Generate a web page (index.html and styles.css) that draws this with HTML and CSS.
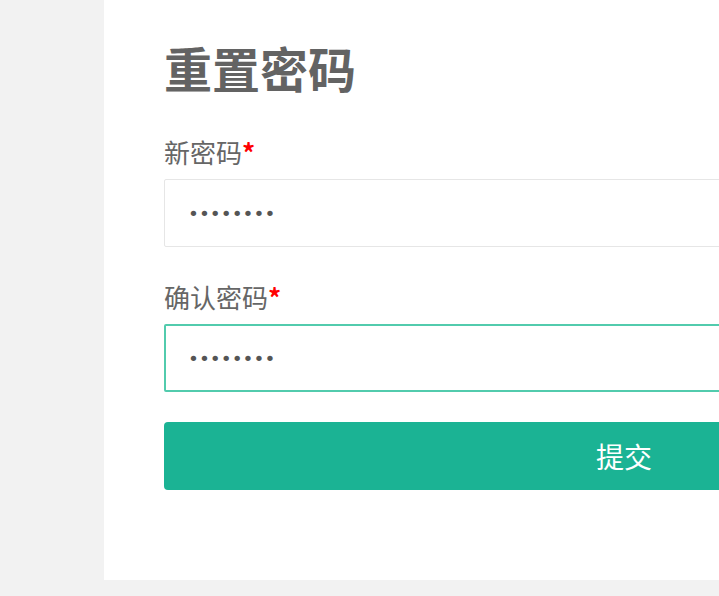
FILE: index.html
```html
<!DOCTYPE html>
<html lang="zh-CN">
<head>
<meta charset="utf-8">
<title>重置密码</title>
<link rel="stylesheet" href="styles.css">
</head>
<body>
<main class="page">
  <section class="card">
    <h1 class="title">重置密码</h1>
    <form class="form">
      <label class="field">
        <span class="label">新密码<span class="req">*</span></span>
        <input class="input" type="password" value="12345678">
      </label>
      <label class="field">
        <span class="label">确认密码<span class="req">*</span></span>
        <input class="input is-focus" type="password" value="12345678">
      </label>
      <button class="submit" type="button">提交</button>
    </form>
  </section>
</main>
</body>
</html>
```
FILE: styles.css
```css
html, body {
  margin: 0;
  padding: 0;
  overflow: hidden;
  background: #f2f2f2;
}
body {
  font-family: "Noto Sans CJK SC", "Noto Sans", sans-serif;
  color: #666;
}
.page {
  padding-left: 104px;
  width: 1300px;
}
.card {
  width: 1040px;
  box-sizing: border-box;
  background: #fff;
  padding: 43px 60px 90px;
}
.title {
  margin: 0;
  font-size: 48px;
  line-height: 48px;
  font-weight: 700;
  color: #636363;
}
.form {
  display: flex;
  flex-direction: column;
  margin-top: 48px;
}
.field {
  display: flex;
  flex-direction: column;
  gap: 14px;
  margin-bottom: 37px;
}
.field:nth-child(2) {
  margin-bottom: 30px;
}
.label {
  font-size: 26px;
  line-height: 26px;
  color: #666;
}
.req {
  color: #ff0000;
  font-weight: 700;
}
.input {
  box-sizing: border-box;
  height: 68px;
  width: 100%;
  margin: 0;
  padding: 0 23px;
  border: 1px solid #e6e6e6;
  border-radius: 2px;
  background: #fff;
  font-family: "DejaVu Sans", sans-serif;
  font-size: 18.5px;
  color: #555;
  outline: none;
}
.input.is-focus {
  border: 2px solid #52cbad;
  padding-left: 22px;
}
.submit {
  height: 68px;
  width: 100%;
  border: 0;
  border-radius: 4px;
  background: #1bb394;
  color: #fff;
  font-family: "Noto Sans CJK SC", sans-serif;
  font-size: 28px;
  cursor: pointer;
}
```
